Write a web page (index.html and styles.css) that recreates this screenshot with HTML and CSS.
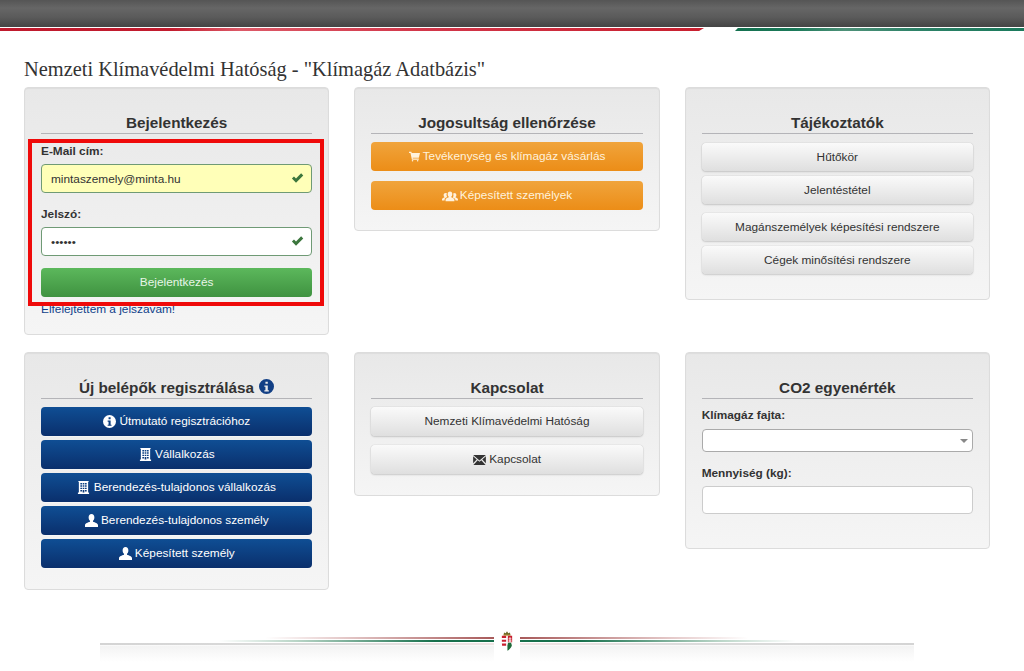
FILE: index.html
```html
<!DOCTYPE html>
<html lang="hu">
<head>
<meta charset="utf-8">
<title>Nemzeti Klímavédelmi Hatóság</title>
<link rel="stylesheet" href="styles.css">
</head>
<body>
<svg class="defs" aria-hidden="true">
  <symbol id="i-check" viewBox="0 0 14 12"><path d="M1 6.500 3.200 4.400 5.400 6.600 10.900 1 13.200 3.200 5.400 11z"/></symbol>
  <symbol id="i-cart" viewBox="0 0 14 13"><path d="M0 .5h3l.5 1.500H14l-1.500 6H4.600l.3 1.200H12.500V10.500H3.700L1.900 2H0zM4.500 11a1 1 0 1 1 0 2 1 1 0 0 1 0-2zM11 11a1 1 0 1 1 0 2 1 1 0 0 1 0-2z"/></symbol>
  <symbol id="i-users" viewBox="0 0 18 12"><path d="M9 1c1.700 0 2.600 1.300 2.600 3 0 1.200-.5 2.300-1.200 2.800v.7c1.800.6 3.600 1.300 3.600 3V12H4v-1.500c0-1.700 1.800-2.400 3.600-3v-.7C6.900 6.300 6.400 5.200 6.400 4 6.400 2.300 7.300 1 9 1z"/><path d="M4.200 2.500c.5 0 1 .1 1.300.4-.3.600-.4 1.200-.4 1.800 0 .9.300 1.800.8 2.400-1.600.6-3 1.500-3 3V11H0V9.800c0-1.200 1.300-1.700 2.700-2.200V7C2.200 6.600 1.800 5.700 1.800 4.800c0-1.300.9-2.300 2.400-2.300zM13.800 2.500c1.500 0 2.400 1 2.400 2.300 0 .9-.4 1.800-.9 2.200v.6c1.400.5 2.700 1 2.700 2.200V11h-2.900v-.4c0-1.500-1.400-2.400-3-3 .5-.6.800-1.500.8-2.400 0-.6-.1-1.200-.4-1.800.3-.3.8-.4 1.300-.4z"/></symbol>
  <symbol id="i-info" viewBox="0 0 14 14"><path fill-rule="evenodd" d="M7 0a7 7 0 1 1 0 14A7 7 0 0 1 7 0zM6 2.500v2h2.200v-2zM5 6v1.300h1v3.200H5v1.200h4.200v-1.200h-1V6z"/></symbol>
  <symbol id="i-building" viewBox="0 0 12 14"><path fill-rule="evenodd" d="M.5 0h11v1.200H11v11.300h1V14H0v-1.500h1V1.200H.5zM2.600 2.200v1.500h1.800V2.200zm2.500 0v1.500h1.800V2.200zm2.500 0v1.500h1.800V2.200zM2.600 4.700v1.500h1.800V4.700zm2.500 0v1.500h1.800V4.700zm2.500 0v1.500h1.800V4.700zM2.600 7.200v1.500h1.800V7.200zm2.500 0v1.500h1.800V7.200zm2.500 0v1.500h1.800V7.200zM2.600 9.700v1.500h1.800V9.700zm2.500 0v2.800h1.800V9.700zm2.500 0v1.500h1.800V9.700z"/></symbol>
  <symbol id="i-user" viewBox="0 0 14 14"><path d="M7 0c2 0 3.100 1.600 3.100 3.700 0 1.500-.6 2.900-1.500 3.500v1.100c2.300.8 5.400 1.500 5.400 3.800V14H0v-1.900c0-2.300 3.100-3 5.400-3.800V7.200C4.500 6.600 3.900 5.200 3.900 3.700 3.900 1.600 5 0 7 0z"/></symbol>
  <symbol id="i-mail" viewBox="0 0 14 11"><path d="M0 0h14L7 6zM0 1.500l4 3.400-4 4.300zM14 1.500v7.700l-4-4.300zM5 5.800l2 1.700 2-1.700L13.700 11H.3z"/></symbol>
</svg>

<header class="topbar"></header>
<div class="flag">
  <div class="flag-red"></div>
  <div class="flag-green"></div>
</div>

<main class="page">
  <h1 class="page-title">Nemzeti Klímavédelmi Hatóság - "Klímagáz Adatbázis"</h1>

  <div class="grid">
    <section class="well well-login">
      <h2 class="well-title">Bejelentkezés</h2>
      <form class="form">
        <label class="label" for="email">E-Mail cím:</label>
        <div class="field">
          <input class="input input-ok input-fill" id="email" type="text" value="mintaszemely@minta.hu">
          <svg class="ok-icon"><use href="#i-check"/></svg>
        </div>
        <label class="label" for="pw">Jelszó:</label>
        <div class="field field-last">
          <input class="input input-ok" id="pw" type="password" value="aaaaaa">
          <svg class="ok-icon"><use href="#i-check"/></svg>
        </div>
        <button class="btn btn-green btn-submit" type="button">Bejelentkezés</button>
        <a class="forgot" href="#">Elfelejtettem a jelszavam!</a>
      </form>
      <div class="highlight"></div>
    </section>

    <section class="well well-check">
      <h2 class="well-title">Jogosultság ellenőrzése</h2>
      <div class="stack stack-orange">
        <a class="btn btn-orange"><svg class="ico ico-cart"><use href="#i-cart"/></svg> Tevékenység és klímagáz vásárlás</a>
        <a class="btn btn-orange"><svg class="ico ico-users"><use href="#i-users"/></svg>Képesített személyek</a>
      </div>
    </section>

    <section class="well well-info">
      <h2 class="well-title">Tájékoztatók</h2>
      <div class="stack stack-info">
        <a class="btn btn-default">Hűtőkör</a>
        <a class="btn btn-default">Jelentéstétel</a>
        <a class="btn btn-default btn-break">Magánszemélyek képesítési rendszere</a>
        <a class="btn btn-default">Cégek minősítési rendszere</a>
      </div>
    </section>

    <section class="well">
      <h2 class="well-title">Új belépők regisztrálása <svg class="title-info"><use href="#i-info"/></svg></h2>
      <div class="stack stack-tight">
        <a class="btn btn-blue"><svg class="ico"><use href="#i-info"/></svg> Útmutató regisztrációhoz</a>
        <a class="btn btn-blue"><svg class="ico"><use href="#i-building"/></svg> Vállalkozás</a>
        <a class="btn btn-blue"><svg class="ico"><use href="#i-building"/></svg> Berendezés-tulajdonos vállalkozás</a>
        <a class="btn btn-blue"><svg class="ico"><use href="#i-user"/></svg> Berendezés-tulajdonos személy</a>
        <a class="btn btn-blue"><svg class="ico"><use href="#i-user"/></svg> Képesített személy</a>
      </div>
    </section>

    <section class="well">
      <h2 class="well-title">Kapcsolat</h2>
      <div class="stack stack-loose">
        <a class="btn btn-default">Nemzeti Klímavédelmi Hatóság</a>
        <a class="btn btn-default"><svg class="ico ico-mail"><use href="#i-mail"/></svg> Kapcsolat</a>
      </div>
    </section>

    <section class="well well-co2">
      <h2 class="well-title">CO2 egyenérték</h2>
      <label class="label" for="gas">Klímagáz fajta:</label>
      <div class="select" id="gas"><span class="caret"></span></div>
      <label class="label label-qty" for="qty">Mennyiség (kg):</label>
      <input class="input input-plain" id="qty" type="text">
    </section>
  </div>
</main>

<footer class="seal">
  <div class="rule rule-left"><i class="r1"></i><i class="r2"></i><i class="r3"></i></div>
  <svg class="crest" viewBox="0 0 14 24">
    <path fill="#6d6a2a" d="M3 5.500 3.500 2 5.500 3 7 .5 8.500 3 10.500 2 11 5.500z"/>
    <path fill="#b5933a" d="M3 4.500h8v1.500H3z"/>
    <path fill="#fff" d="M1 6h12v9c0 4-3 7-6 8.500C4 22 1 19 1 15z"/>
    <path fill="#c8202f" d="M1 6h5v2.500H1zM1 10.500h5V13H1zM1 15h5v2.500H1.300zM8 6h5v7.500c-1.500 0-3.500 0-5 0z"/>
    <path fill="#fff" d="M10 7.500h1v1.500h1.200v1H11v1.500h1.300v1H11v1.200h-1v-1.200H8.700v-1H10V10H8.800V9H10z"/>
    <path fill="#1f6b3a" d="M7.500 16h5.300c0 3-2.700 5.800-5.300 7.300zM8 14h4v2H8z"/>
  </svg>
  <div class="rule rule-right"><i class="r1"></i><i class="r2"></i><i class="r3"></i></div>
</footer>
</body>
</html>
```

FILE: styles.css
```css
* { box-sizing: border-box; }
html, body { margin: 0; padding: 0; }
body {
  background: #fff;
  color: #333;
  font-family: "Liberation Sans", Arial, sans-serif;
  font-size: 11.84px;
  line-height: 17px;
  overflow: hidden;
}
.defs { position: absolute; width: 0; height: 0; }

.topbar {
  height: 27px;
  background: linear-gradient(to bottom, #555 0, #666 30%, #5a5a5a 65%, #444 100%);
}
.flag { display: flex; justify-content: space-between; height: 4px; border-top: 1px solid #fff; }
.flag-red {
  width: 704px;
  background: linear-gradient(to right, #bf1a2d 0, #c21c2e 170px, #dc5a68 240px, #d2374a 420px, #c8202f 700px);
  clip-path: polygon(0 0, 100% 0, 99.3% 100%, 0 100%);
}
.flag-green {
  width: 289px;
  background: linear-gradient(to right, #14704f 0, #1c7a5a 60px, #4f9179 110px, #2e8268 180px, #1b7a5c 289px);
  clip-path: polygon(1% 0, 100% 0, 100% 100%, 0 100%);
}

.page { padding: 0 34px 0 24px; }
.page-title {
  margin: 0;
  padding-top: 26px;
  height: 56px;
  font-family: "Liberation Serif", "Times New Roman", serif;
  font-size: 20.4px;
  font-weight: 400;
  line-height: 24px;
  color: #333;
}
.grid {
  display: grid;
  grid-template-columns: 305.33px 305.33px 305.33px;
  grid-template-rows: 265px auto;
  column-gap: 25px;
  align-items: start;
}
.well {
  position: relative;
  padding: 0 16px 21px;
  background: linear-gradient(to bottom, #e8e8e8 0, #f5f5f5 100%);
  border: 1px solid #dcdcdc;
  border-radius: 4px;
  box-shadow: inset 0 1px 1px rgba(0, 0, 0, .05);
}
.well-check { padding-bottom: 20px; }
.well-title {
  margin: 26px 0 0;
  height: 20px;
  border-bottom: 1px solid #b4b4b8;
  font-size: 15.3px;
  font-weight: 700;
  line-height: 17px;
  text-align: center;
  color: #333;
}
.title-info { width: 15px; height: 15px; margin-left: 1px; vertical-align: -1px; fill: #123f85; }

.label { display: block; font-size: 11.84px; font-weight: 700; line-height: 17px; color: #333; }
.form { padding-top: 9px; }
.form .label { margin-bottom: 4px; }
.field { position: relative; margin-bottom: 13px; }
.field-last { margin-bottom: 12px; }
.input {
  display: block;
  width: 100%;
  height: 29px;
  padding: 4px 9px;
  border-radius: 4px;
  font-family: "Liberation Sans", Arial, sans-serif;
  font-size: 11.84px;
  color: #333;
  background: #fff;
  outline: 0;
}
.input-ok { border: 1px solid #6f9a75; }
.input-fill { background: #ffffb8; }
.input-plain { border: 1px solid #ccc; height: 28px; }
.ok-icon { position: absolute; right: 8px; top: 8px; width: 13px; height: 12px; fill: #3c763d; }

.btn {
  display: flex;
  align-items: center;
  justify-content: center;
  width: 100%;
  height: 29px;
  padding: 0;
  border: 0;
  border-radius: 4px;
  font-family: "Liberation Sans", Arial, sans-serif;
  font-size: 11.84px;
  line-height: 17px;
  text-align: center;
  white-space: pre;
}
.btn-submit { color: #e8f5e8; }
.btn-green { background: linear-gradient(to bottom, #5cb85c 0, #3f9240 100%); }
.btn-orange {
  color: #fff2dc;
  background: linear-gradient(to bottom, #f0a43c 0, #ec8d17 100%);
}
.btn-blue {
  color: #fff;
  background: linear-gradient(to bottom, #0f4e94 0, #0a2f6c 100%);
  box-shadow: 0 1px 0 rgba(255, 255, 255, .4);
}
.btn-default {
  color: #333;
  background: linear-gradient(to bottom, #fafafa 0, #dfdfdf 100%);
  box-shadow: 0 0 1px rgba(0, 0, 0, .3), 0 1px 2px rgba(0, 0, 0, .15);
}
.forgot { display: block; margin-top: 4px; color: #0f3f8a; text-decoration: none; }

.stack { display: flex; flex-direction: column; padding-top: 8px; }
.stack-loose { gap: 9px; }
.stack-orange { gap: 10px; }
.stack-tight { gap: 4px; }
.stack-info { gap: 5px; padding-top: 9px; }
.stack-info .btn { height: 28px; }
.btn-break { margin-top: 4px; }

.ico { flex: none; width: 13px; height: 13px; fill: currentColor; }
.ico-cart { width: 11px; height: 11px; }
.ico-users { width: 16px; height: 12px; margin-right: 2px; }
.ico-mail { width: 13px; height: 10px; }

.well-login { height: 248px; }
.well-info { height: 213px; }
.well-co2 { height: 197px; }
.well-co2 .label { margin-top: 8px; margin-bottom: 5px; }
.well-co2 .label-qty { margin-top: 13px; margin-bottom: 4px; }

.select {
  position: relative;
  height: 23px;
  border: 1px solid #aaa;
  border-radius: 4px;
  background: #fff;
}
.caret {
  position: absolute;
  right: 4px;
  top: 9px;
  width: 0;
  height: 0;
  border-left: 4px solid transparent;
  border-right: 4px solid transparent;
  border-top: 4px solid #888;
}

.highlight {
  position: absolute;
  left: 3px;
  top: 51px;
  width: 296px;
  height: 167px;
  border: 4px solid #ef0a0a;
  pointer-events: none;
}

.seal {
  display: flex;
  align-items: flex-start;
  width: 814px;
  height: 40px;
  margin: 40px 0 0 100px;
}
.rule {
  flex: 1;
  height: 34px;
  padding-top: 7px;
  background: linear-gradient(to bottom, transparent 15px, #f3f3f3 16px, transparent 32px);
}
.rule i { display: block; height: 2px; margin-bottom: 1px; }
.rule-left .r1 { background: linear-gradient(to right, transparent 42%, #e4c8c8 62%, #a85a5a 100%); }
.rule-left .r2 { background: linear-gradient(to right, transparent 30%, #b8d4c6 50%, #17704c 85%); }
.rule-left .r3 { background: linear-gradient(to right, #d4d4d4 0, #dcdcdc 60%, #f0e4e4 100%); }
.rule-right .r1 { background: linear-gradient(to left, transparent 42%, #e4c8c8 62%, #a85a5a 100%); }
.rule-right .r2 { background: linear-gradient(to left, transparent 30%, #b8d4c6 50%, #17704c 85%); }
.rule-right .r3 { background: linear-gradient(to left, #d4d4d4 0, #dcdcdc 60%, #f0e4e4 100%); }
.crest { flex: none; width: 12px; height: 22px; margin: 0 7px; }
```
